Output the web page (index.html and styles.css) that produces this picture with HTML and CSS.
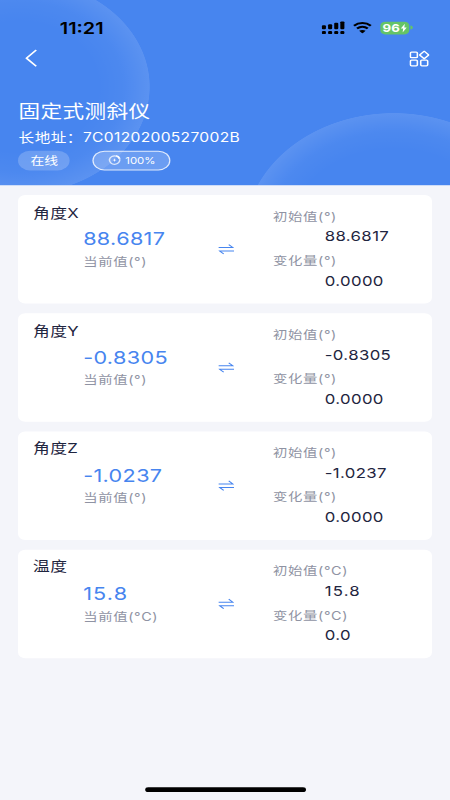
FILE: index.html
```html
<!DOCTYPE html>
<html lang="zh-CN">
<head>
<meta charset="utf-8">
<title>固定式测斜仪</title>
<link rel="stylesheet" href="styles.css">
</head>
<body>
<div class="screen">
  <header class="hero">
    <div class="status">
      <span class="time">11:21</span>
      <svg class="signal" viewBox="0 0 20 14" width="20" height="14">
        <rect x="0.2" y="4.6" width="3.4" height="4" rx="1"/><rect x="5.4" y="3.6" width="3.4" height="5" rx="1"/><rect x="10.5" y="2.2" width="3.4" height="6.4" rx="1"/><rect x="15.6" y="0.7" width="3.4" height="7.9" rx="1"/>
        <rect x="0.2" y="10.4" width="3.4" height="3.2" rx="1.2"/><rect x="5.4" y="10.4" width="3.4" height="3.2" rx="1.2"/><rect x="10.5" y="10.4" width="3.4" height="3.2" rx="1.2"/><rect x="15.6" y="10.4" width="3.4" height="3.2" rx="1.2"/>
      </svg>
      <svg class="wifi" viewBox="0 0 16 12" width="16" height="12">
        <path d="M1 4.100C5 .5 11 .5 15 4.100M3.500 7C6.200 4.700 9.800 4.700 12.500 7" fill="none" stroke="#000" stroke-width="2.100"/>
        <path d="M5.300 9.300C6.900 8 9.100 8 10.700 9.300L8 12z"/>
      </svg>
      <span class="battery">96<svg viewBox="0 0 5 9" width="5" height="9"><path d="M3.400 0L0 5H2L1.500 9L5 3.800H2.900z" fill="#fff"/></svg></span>
      <span class="nub"></span>
    </div>
    <nav class="nav">
      <svg viewBox="0 0 10 18" width="10" height="18"><path d="M9.200 .7L1 9L9.200 17.300" fill="none" stroke="#fff" stroke-width="1.500"/></svg>
      <svg viewBox="0 0 17 17" width="17" height="17" fill="none" stroke="#fff" stroke-width="1.300">
        <rect x="1" y="1.800" width="5.800" height="5.800" rx="1"/><path d="M12.500 .9L16.300 4.800L12.500 8.700L8.700 4.800z" stroke-linejoin="round"/><rect x="1" y="10" width="5.800" height="5.800" rx="1"/><rect x="9.600" y="10" width="5.800" height="5.800" rx="1"/>
      </svg>
    </nav>
    <h1>固定式测斜仪</h1>
    <p class="address"><span>长地址：</span><span class="code">7C0120200527002B</span></p>
    <div class="tags">
      <span class="tag online">在线</span>
      <span class="tag power"><svg viewBox="0 0 12 12" width="11" height="11"><path d="M7.500 1.500A4.700 4.700 0 1 0 10.600 5" fill="none" stroke="#fff" stroke-opacity=".75" stroke-width="1.400"/><path d="M7.500 .3Q10.500 1.200 11.600 4.200L9.700 4.700Q9 2.800 7.200 2z" fill="#fff"/><path d="M6 4L6.500 5.500L8 6L6.500 6.500L6 8L5.500 6.500L4 6L5.500 5.500z" fill="#fff"/></svg>100%</span>
    </div>
  </header>

  <main class="cards">
    <section class="card">
      <div class="current"><h2>角度X</h2><strong>88.6817</strong><span>当前值(°)</span></div>
      <svg class="swap" viewBox="0 0 13 12" width="13" height="12"><path d="M0 4.200H12L8.600 1.200M13 7.800H1L4.400 10.800"/></svg>
      <dl><dt>初始值(°)</dt><dd>88.6817</dd><dt>变化量(°)</dt><dd>0.0000</dd></dl>
    </section>
    <section class="card">
      <div class="current"><h2>角度Y</h2><strong>-0.8305</strong><span>当前值(°)</span></div>
      <svg class="swap" viewBox="0 0 13 12" width="13" height="12"><path d="M0 4.200H12L8.600 1.200M13 7.800H1L4.400 10.800"/></svg>
      <dl><dt>初始值(°)</dt><dd>-0.8305</dd><dt>变化量(°)</dt><dd>0.0000</dd></dl>
    </section>
    <section class="card">
      <div class="current"><h2>角度Z</h2><strong>-1.0237</strong><span>当前值(°)</span></div>
      <svg class="swap" viewBox="0 0 13 12" width="13" height="12"><path d="M0 4.200H12L8.600 1.200M13 7.800H1L4.400 10.800"/></svg>
      <dl><dt>初始值(°)</dt><dd>-1.0237</dd><dt>变化量(°)</dt><dd>0.0000</dd></dl>
    </section>
    <section class="card">
      <div class="current"><h2>温度</h2><strong class="short">15.8</strong><span>当前值(°C)</span></div>
      <svg class="swap" viewBox="0 0 13 12" width="13" height="12"><path d="M0 4.200H12L8.600 1.200M13 7.800H1L4.400 10.800"/></svg>
      <dl><dt>初始值(°C)</dt><dd class="short">15.8</dd><dt>变化量(°C)</dt><dd>0.0</dd></dl>
    </section>
  </main>
  <div class="home-bar"></div>
</div>
</body>
</html>
```
FILE: styles.css
```css
* { box-sizing: border-box; margin: 0; padding: 0; }
html, body { width: 450px; height: 800px; overflow: hidden; background: #f4f5fa; }
svg { display: block; flex: none; }

/* A 375x812 point layout fitted to the 450x800 viewport. */
.screen {
  width: 375px;
  height: 812px;
  transform: scale(1.2, 0.98522);
  transform-origin: 0 0;
  display: flex;
  flex-direction: column;
  background: #f4f5fa;
  font-family: Inter, "Noto Sans CJK SC", sans-serif;
}

.hero {
  height: 187.800px;
  color: #fff;
  background:
    radial-gradient(circle 109px at 16px 88px, rgba(255,255,255,0) 60%, rgba(255,255,255,.03) 80%, rgba(255,255,255,.11) 99.500%, rgba(255,255,255,0) 100%),
    radial-gradient(circle 124.500px at 328px 239px, rgba(255,255,255,0) 70%, rgba(255,255,255,.03) 85%, rgba(255,255,255,.11) 99.500%, rgba(255,255,255,0) 100%),
    #4785ef;
}

.status { height: 44px; padding: 12px 31.500px 0 49.800px; display: flex; align-items: center; }
.time { margin: 1px auto 0 0; color: #000; font-size: 16.500px; font-weight: 600; }
.wifi { margin: 0 7px 0 6px; }
.battery {
  width: 24px;
  height: 13px;
  border-radius: 4px;
  background: #65c466;
  display: flex;
  align-items: center;
  justify-content: center;
  gap: 1px;
  font-size: 11px;
  font-weight: 700;
}
.nub { width: 1.500px; height: 4px; margin-left: 1px; border-radius: 0 2px 2px 0; background: #65c466; }

.nav { height: 30.500px; padding: 0 17.500px 0 21px; display: flex; align-items: center; justify-content: space-between; }

h1 { margin: 26px 0 0 15.500px; height: 26px; line-height: 26px; font-size: 18px; font-weight: 400; letter-spacing: .3px; }
.address { margin: 2.500px 0 0 15.500px; height: 20px; line-height: 20px; font-size: 13px; letter-spacing: .4px; display: flex; }
.code { letter-spacing: .27px; }

.tags { margin: 3.500px 0 0 15.300px; display: flex; gap: 19px; }
.tag { height: 20px; border-radius: 10px; background: rgba(255,255,255,.2); display: flex; align-items: center; justify-content: center; }
.online { width: 43.200px; padding: 0 0 2px 0; font-size: 11.500px; }
.power { width: 65px; border: 1px solid rgba(255,255,255,.8); gap: 3px; font-size: 9.500px; }

.cards { padding: 10px 15.300px 0; display: grid; gap: 10px; }
.card { height: 109.950px; border-radius: 6px; background: #fff; display: grid; grid-template-columns: 166.400px 45.900px 1fr; }

.current { padding: 7.800px 0 0 12.200px; display: flex; flex-direction: column; }
h2 { height: 20px; line-height: 20px; color: #1f2540; font-size: 14px; font-weight: 400; letter-spacing: .3px; }
.current strong { margin: 3.700px 0 0 41.800px; height: 28px; line-height: 28px; color: #4785ef; font-size: 18px; font-weight: 400; letter-spacing: .3px; }
.current span { margin-left: 41.800px; height: 18px; line-height: 18px; color: #8f93a3; font-size: 12px; letter-spacing: .5px; }

.swap { margin-top: 49px; fill: none; stroke: #4785ef; stroke-width: 1; }

dl { padding-top: 13px; }
dt { height: 18px; line-height: 18px; color: #8f93a3; font-size: 12px; letter-spacing: .5px; }
dd { margin: 0 0 5px 43px; height: 22px; line-height: 22px; color: #1f2540; font-size: 14px; letter-spacing: .3px; }
.current .short, .short { letter-spacing: 1px; }

.home-bar { width: 134px; height: 5px; margin: auto auto 8px 121px; border-radius: 3px; background: #000; }
```
